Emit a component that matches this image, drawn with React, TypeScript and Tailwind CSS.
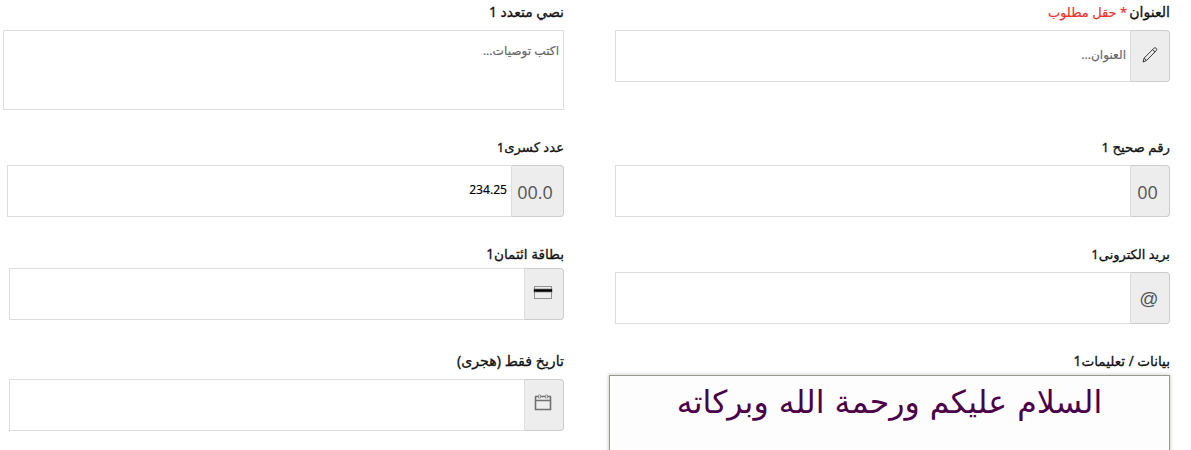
import type { ReactNode } from "react";

function Field({ label, size, gap = "pt-[3px]", row, children }: { label: ReactNode; size: string; gap?: string; row: string; children: ReactNode }) {
  return (
    <section className={`flex flex-col ${row}`}>
      <label className={`flex h-[27px] shrink-0 items-start gap-0.5 whitespace-nowrap text-[#111] [-webkit-text-stroke:0.3px_currentColor] ${size}`}>
        {label}
      </label>
      <div className={gap}>{children}</div>
    </section>
  );
}

function InputBox({ width = "w-[555px]", addonWidth = "w-10", addon, placeholder, value }: { width?: string; addonWidth?: string; addon: ReactNode; placeholder?: string; value?: string }) {
  return (
    <div className={`flex h-[52px] ${width}`}>
      <div className={`flex shrink-0 items-center justify-center rounded-r border border-[#ccc] border-l-[#ddd] bg-[#ededed] pr-0.5 text-[#555] ${addonWidth}`}>
        {addon}
      </div>
      <input
        className="min-w-0 flex-1 border border-r-0 border-[#ddd] bg-white pr-[4px] pb-[1px] text-[12.1px] text-black outline-none placeholder:text-[#666] placeholder:opacity-100 [-webkit-text-stroke:0.15px_currentColor]"
        placeholder={placeholder}
        defaultValue={value}
      />
    </div>
  );
}

function PencilIcon() {
  return (
    <svg width="18" height="18" viewBox="0 0 18 18" fill="none" stroke="#333" strokeWidth="1" strokeLinejoin="round">
      <path d="M2 16l1.2-4L12.9 2.3c1.5-1.5 3.9.8 2.4 2.3L5.6 14.4 2 16zM3.2 12l2.4 2.4M11.7 3.6l2.3 2.3" />
    </svg>
  );
}

function CardIcon() {
  return (
    <svg width="20" height="14" viewBox="0 0 20 14">
      <rect x="1.5" y="0.5" width="17" height="12" fill="none" stroke="#929292" />
      <rect x="0.5" y="2.5" width="19" height="4" fill="#777" opacity="0.7" />
      <rect x="1" y="3.3" width="18" height="2.4" fill="#000" />
    </svg>
  );
}

function CalendarIcon() {
  return (
    <svg width="18" height="18" viewBox="0 0 18 18" fill="none" stroke="#707070">
      <path d="M1.5 2.5v13h15v-13" strokeWidth="1.6" />
      <path d="M1 2.5h3.5M6.5 2.5h5M13.5 2.5H17M1 6.5h16" strokeWidth="1.4" />
      <path d="M4.5 1h2v3h-2zM11.5 1h2v3h-2z" stroke="#888" strokeWidth="0.8" />
    </svg>
  );
}

export default function App() {
  return (
    <main dir="rtl" className="flex h-[450px] w-[1191px] overflow-hidden bg-white pr-[21px] [font-family:'Noto_Sans','DejaVu_Sans',sans-serif]">
      <div className="flex w-[561px] flex-col">
        <Field
          row="h-[135px]"
          size="text-[14.1px] leading-[24px]"
          label={
            <>
              العنوان
              <span className="text-[13px] text-[#f0322d] [-webkit-text-stroke:0.2px_currentColor]">* حقل مطلوب</span>
            </>
          }
        >
          <InputBox addon={<div className="pb-0.5 pl-px"><PencilIcon /></div>} placeholder="العنوان..." />
        </Field>
        <Field row="h-[107px]" size="text-[13.3px] leading-[25px]" label="رقم صحيح 1">
          <InputBox addon={<span className="pt-[3px] pr-[3px] text-[18px] [font-family:'Open_Sans',sans-serif]">00</span>} />
        </Field>
        <Field row="h-[107px]" size="text-[13px] leading-[25px]" label="بريد الكترونى1">
          <InputBox addon={<span className="pt-[3px] text-[19px] [font-family:'Liberation_Sans',sans-serif]">@</span>} />
        </Field>
        <Field row="h-[101px]" size="text-[13.6px] leading-[23px]" gap="-mt-px" label="بيانات / تعليمات1">
          <div className="h-[100px] w-[561px] border border-[#99998a] bg-[#fdfdfd] pt-1 text-center text-[31.6px] leading-[44px] text-[#4b0049] shadow-[0_0_4px_rgba(0,0,0,0.25)] [font-family:'DejaVu_Sans',sans-serif]">
            السلام عليكم ورحمة الله وبركاته
          </div>
        </Field>
      </div>
      <div className="mr-[45px] flex w-[561px] flex-col">
        <Field row="h-[135px]" size="text-[14px] leading-[24px]" label="نصي متعدد 1">
          <textarea
            className="block h-20 w-[561px] resize-none border border-[#ddd] bg-white px-[4px] pt-[11px] text-[12.1px] leading-[18px] outline-none placeholder:text-[#666] placeholder:opacity-100 [-webkit-text-stroke:0.15px_currentColor]"
            placeholder="اكتب توصيات..."
          />
        </Field>
        <Field row="h-[107px]" size="text-[13.2px] leading-[25px]" label="عدد كسرى1">
          <InputBox
            width="w-[557px]"
            addonWidth="w-[53px]"
            value="234.25"
            addon={<span dir="ltr" className="pt-[3px] pr-[3px] text-[18px] [font-family:'Open_Sans',sans-serif]">00.0</span>}
          />
        </Field>
        <Field row="h-[107px]" size="text-[13.6px] leading-[23px]" gap="-mt-px" label="بطاقة ائتمان1">
          <InputBox addon={<div className="pb-[3px]"><CardIcon /></div>} />
        </Field>
        <Field row="h-[101px]" size="text-[14.2px] leading-[23px]" label="تاريخ فقط (هجرى)">
          <InputBox addon={<div className="pb-1"><CalendarIcon /></div>} />
        </Field>
      </div>
    </main>
  );
}
